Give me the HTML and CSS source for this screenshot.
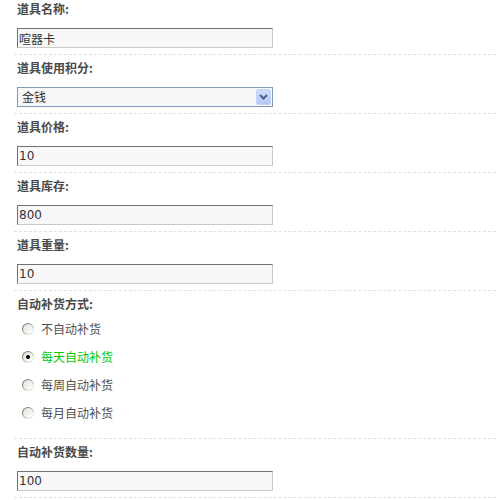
FILE: index.html
```html
<!DOCTYPE html>
<html lang="zh-CN">
<head>
<meta charset="utf-8">
<title>道具编辑</title>
<link rel="stylesheet" href="styles.css">
</head>
<body>
<form class="form">
  <div class="row first">
    <div class="label">道具名称:</div>
    <input class="text" type="text" value="喧器卡">
  </div>
  <div class="row">
    <div class="label">道具使用积分:</div>
    <div class="select">
      <span class="select-value">金钱</span>
      <span class="select-btn">
        <svg width="9" height="6" viewBox="0 0 9 6"><path d="M1 1 L4.5 4.5 L8 1" fill="none" stroke="#4d6185" stroke-width="2"/></svg>
      </span>
    </div>
  </div>
  <div class="row">
    <div class="label">道具价格:</div>
    <input class="text" type="text" value="10">
  </div>
  <div class="row">
    <div class="label">道具库存:</div>
    <input class="text" type="text" value="800">
  </div>
  <div class="row">
    <div class="label">道具重量:</div>
    <input class="text" type="text" value="10">
  </div>
  <div class="row radios">
    <div class="label label-radio">自动补货方式:</div>
    <div class="option"><span class="radio"><span class="radio-in"></span></span><span class="opt-text">不自动补货</span></div>
    <div class="option selected"><span class="radio"><span class="radio-in"><span class="dot"></span></span></span><span class="opt-text">每天自动补货</span></div>
    <div class="option"><span class="radio"><span class="radio-in"></span></span><span class="opt-text">每周自动补货</span></div>
    <div class="option"><span class="radio"><span class="radio-in"></span></span><span class="opt-text">每月自动补货</span></div>
  </div>
  <div class="row">
    <div class="label">自动补货数量:</div>
    <input class="text" type="text" value="100">
  </div>
</form>
</body>
</html>
```

FILE: styles.css
```css
html, body {
  margin: 0;
  padding: 0;
  background: #fff;
}
body {
  font-family: "DejaVu Sans", "Noto Sans CJK SC", sans-serif;
  font-size: 12px;
  color: #444;
}
.form {
  margin: 0 4px 0 14px;
}
.row {
  padding: 5px 0 6px 3px;
  border-bottom: 1px dashed #d3e5f4;
  display: flex;
  flex-direction: column;
  align-items: flex-start;
}
.row.first {
  padding-top: 1px;
}
.label {
  font-family: "Noto Sans CJK SC", sans-serif;
  font-weight: bold;
  font-size: 12px;
  line-height: 16px;
  height: 16px;
  color: #4a4a4a;
  margin-bottom: 11px;
}
.text {
  box-sizing: border-box;
  width: 256px;
  height: 20px;
  margin: 0;
  padding: 0 1px;
  border-style: solid;
  border-width: 1px;
  border-color: #717171 #c9c9c9 #c9c9c9 #717171;
  background: #f8f8f8;
  font-family: "DejaVu Sans", "Noto Sans CJK SC", sans-serif;
  font-size: 12px;
  color: #333;
  outline: none;
}
.select {
  box-sizing: border-box;
  width: 256px;
  height: 20px;
  border: 1px solid #7f9db9;
  background: #f8f8f8;
  display: flex;
  align-items: center;
}
.select-value {
  flex: 1;
  padding-left: 4px;
  font-family: "Noto Sans CJK SC", sans-serif;
  color: #333;
  line-height: 18px;
}
.select-btn {
  box-sizing: border-box;
  width: 15px;
  height: 16px;
  margin-right: 1px;
  border: 1px solid #c3d3f5;
  border-radius: 2px;
  background: linear-gradient(#cddcfc, #b4c8f6);
  display: flex;
  align-items: center;
  justify-content: center;
}
.label-radio {
  margin-bottom: 3px;
}
.radios {
  padding-bottom: 11px;
}
.option {
  height: 28px;
  display: flex;
  align-items: center;
  padding-left: 5px;
  font-family: "Noto Sans CJK SC", sans-serif;
  color: #505050;
}
.radio {
  box-sizing: border-box;
  width: 12px;
  height: 12px;
  border-radius: 50%;
  padding: 1px;
  background: linear-gradient(135deg, #7c7c74 25%, #e6e6dc 75%);
  display: flex;
  align-items: center;
  justify-content: center;
}
.radio-in {
  width: 10px;
  height: 10px;
  border-radius: 50%;
  background: linear-gradient(135deg, #e2e2da, #ffffff);
  display: flex;
  align-items: center;
  justify-content: center;
}
.dot {
  width: 4px;
  height: 4px;
  border-radius: 50%;
  background: #000;
}
.opt-text {
  margin-left: 7px;
  line-height: 16px;
}
.selected .opt-text {
  color: #00c800;
}
```
